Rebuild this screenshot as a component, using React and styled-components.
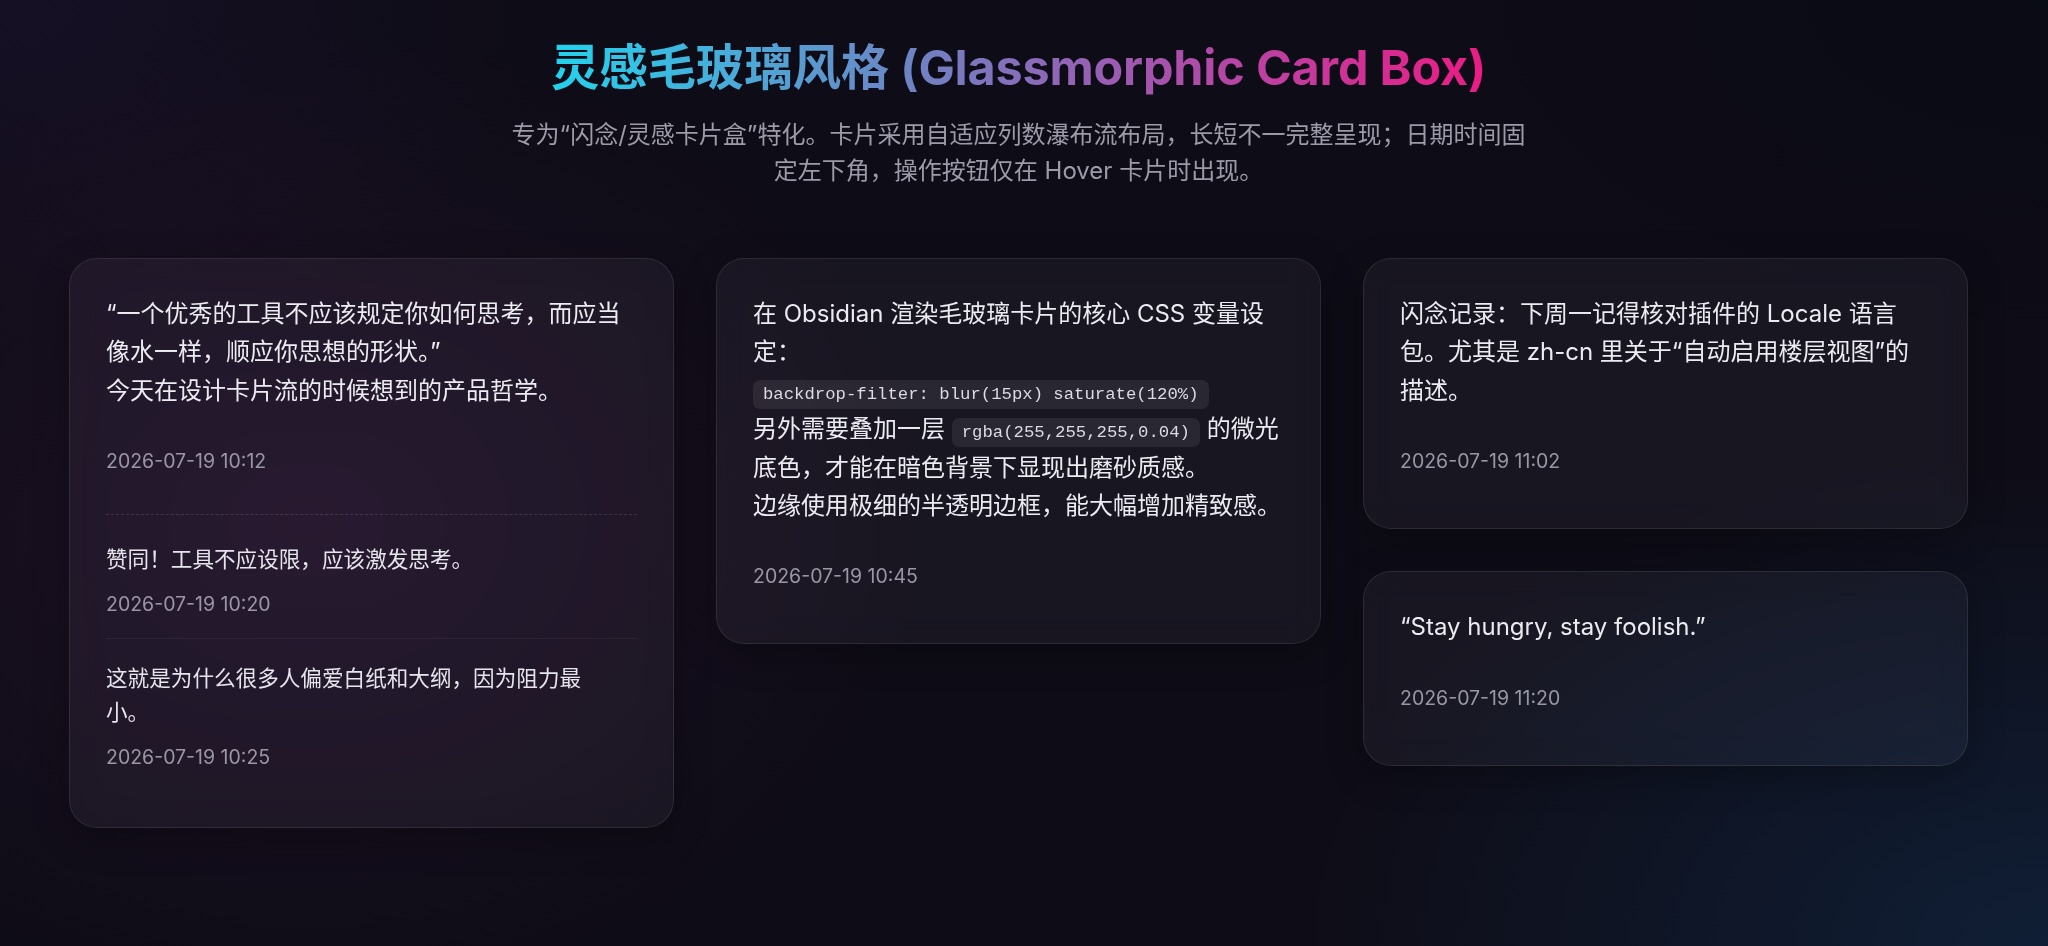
import React from "react";
import styled, { createGlobalStyle } from "styled-components";
import { Pencil, Trash2, MessageSquare } from "lucide-react";

const GlobalStyle = createGlobalStyle`
  html, body {
    margin: 0;
    padding: 0;
    min-height: 100%;
  }
  body {
    min-height: 100vh;
    background-color: #0e0c16;
    background-image:
      radial-gradient(ellipse 900px 700px at 15% 55%, rgba(110, 40, 110, 0.16), transparent 70%),
      radial-gradient(ellipse 1100px 700px at 100% 100%, rgba(20, 70, 120, 0.32), transparent 70%),
      radial-gradient(ellipse 800px 500px at 0% 0%, rgba(50, 30, 90, 0.22), transparent 70%),
      radial-gradient(ellipse 900px 500px at 100% 0%, rgba(5, 10, 20, 0.5), transparent 70%);
    font-family: "Inter", "Noto Sans CJK SC", sans-serif;
    color: #ebe9f0;
  }
`;

const Page = styled.div`
  min-height: 100vh;
  box-sizing: border-box;
  padding: 39px 80px 60px 69px;
`;

const Header = styled.header`
  display: flex;
  flex-direction: column;
  align-items: center;
  text-align: center;
  margin-bottom: 69px;
`;

const Title = styled.h1`
  margin: 0;
  font-size: 48.5px;
  line-height: 58px;
  font-weight: 700;
  letter-spacing: -0.2px;
  background: linear-gradient(90deg, #22d3ee 0%, #4fa6d6 22%, #6d84c4 38%, #b04aa8 70%, #ec1b84 100%);
  -webkit-background-clip: text;
  background-clip: text;
  color: transparent;
`;

const Subtitle = styled.p`
  margin: 20px 0 0;
  max-width: 1030px;
  font-size: 24px;
  line-height: 36px;
  color: #9d9ba8;
`;

const Masonry = styled.div`
  display: grid;
  grid-template-columns: repeat(3, 1fr);
  gap: 42px;
  align-items: start;
`;

const Column = styled.div`
  display: flex;
  flex-direction: column;
  gap: 42px;
`;

const Card = styled.article`
  position: relative;
  box-sizing: border-box;
  padding: 36px 36px;
  border-radius: 28px;
  background: rgba(255, 255, 255, 0.045);
  border: 1px solid rgba(255, 255, 255, 0.09);
  box-shadow: 0 10px 36px rgba(0, 0, 0, 0.28);
  backdrop-filter: blur(15px) saturate(120%);

  &:hover .actions {
    opacity: 1;
  }
`;

const Body = styled.div`
  font-size: 24px;
  line-height: 38.4px;
  color: #ecebf1;
  word-break: break-word;
`;

const Code = styled.code`
  font-family: "Liberation Mono", monospace;
  font-size: 17.3px;
  line-height: 1;
  padding: 5px 10px;
  border-radius: 7px;
  background: rgba(255, 255, 255, 0.075);
  color: #dcdae2;
`;

const Footer = styled.div`
  display: flex;
  align-items: center;
  justify-content: space-between;
  margin-top: 20px;
  min-height: 62px;
`;

const DateText = styled.time`
  font-family: "Inter", sans-serif;
  font-size: 19.5px;
  line-height: 24px;
  color: #9a97a5;
`;

const Actions = styled.div`
  display: flex;
  gap: 10px;
  opacity: 0;
  transition: opacity 0.2s ease;
`;

const ActionButton = styled.button`
  display: flex;
  align-items: center;
  justify-content: center;
  width: 40px;
  height: 40px;
  border-radius: 10px;
  border: 1px solid rgba(255, 255, 255, 0.1);
  background: rgba(255, 255, 255, 0.06);
  color: #c9c6d3;
  cursor: pointer;
`;

const Thread = styled.div`
  margin-top: 22px;
  padding-top: 5px;
  border-top: 1px dashed rgba(255, 255, 255, 0.13);
`;

const Reply = styled.div`
  padding: 22px 0;

  & + & {
    border-top: 1px solid rgba(255, 255, 255, 0.06);
  }
`;

const ReplyText = styled.div`
  padding-right: 24px;
  font-size: 21.6px;
  line-height: 34.6px;
  color: #e6e4ec;
`;

const ReplyDate = styled(DateText)`
  display: block;
  margin-top: 15px;
`;

const columns = [
  [
    {
      id: 1,
      body: (
        <>
          “一个优秀的工具不应该规定你如何思考，而应当像水一样，顺应你思想的形状。”
          <br />
          今天在设计卡片流的时候想到的产品哲学。
        </>
      ),
      date: "2026-07-19 10:12",
      replies: [
        { text: "赞同！工具不应设限，应该激发思考。", date: "2026-07-19 10:20" },
        { text: "这就是为什么很多人偏爱白纸和大纲，因为阻力最小。", date: "2026-07-19 10:25" },
      ],
    },
  ],
  [
    {
      id: 2,
      body: (
        <>
          在 Obsidian 渲染毛玻璃卡片的核心 CSS 变量设定：
          <br />
          <Code>backdrop-filter: blur(15px) saturate(120%)</Code>
          <br />
          另外需要叠加一层 <Code>rgba(255,255,255,0.04)</Code> 的微光底色，才能在暗色背景下显现出磨砂质感。
          <br />
          边缘使用极细的半透明边框，能大幅增加精致感。
        </>
      ),
      date: "2026-07-19 10:45",
    },
  ],
  [
    {
      id: 3,
      body: "闪念记录：下周一记得核对插件的 Locale 语言包。尤其是 zh-cn 里关于“自动启用楼层视图”的描述。",
      date: "2026-07-19 11:02",
    },
    {
      id: 4,
      body: "“Stay hungry, stay foolish.”",
      date: "2026-07-19 11:20",
    },
  ],
];

const IdeaCard = ({ card }) => (
  <Card>
    <Body>{card.body}</Body>
    <Footer>
      <DateText>{card.date}</DateText>
      <Actions className="actions">
        <ActionButton aria-label="回复">
          <MessageSquare size={18} />
        </ActionButton>
        <ActionButton aria-label="编辑">
          <Pencil size={18} />
        </ActionButton>
        <ActionButton aria-label="删除">
          <Trash2 size={18} />
        </ActionButton>
      </Actions>
    </Footer>
    {card.replies && (
      <Thread>
        {card.replies.map((r) => (
          <Reply key={r.date}>
            <ReplyText>{r.text}</ReplyText>
            <ReplyDate>{r.date}</ReplyDate>
          </Reply>
        ))}
      </Thread>
    )}
  </Card>
);

export default function App() {
  return (
    <>
      <GlobalStyle />
      <Page>
        <Header>
          <Title>灵感毛玻璃风格 (Glassmorphic Card Box)</Title>
          <Subtitle>
            专为“闪念/灵感卡片盒”特化。卡片采用自适应列数瀑布流布局，长短不一完整呈现；日期时间固定左下角，操作按钮仅在 Hover 卡片时出现。
          </Subtitle>
        </Header>
        <Masonry>
          {columns.map((col, i) => (
            <Column key={i}>
              {col.map((card) => (
                <IdeaCard key={card.id} card={card} />
              ))}
            </Column>
          ))}
        </Masonry>
      </Page>
    </>
  );
}
